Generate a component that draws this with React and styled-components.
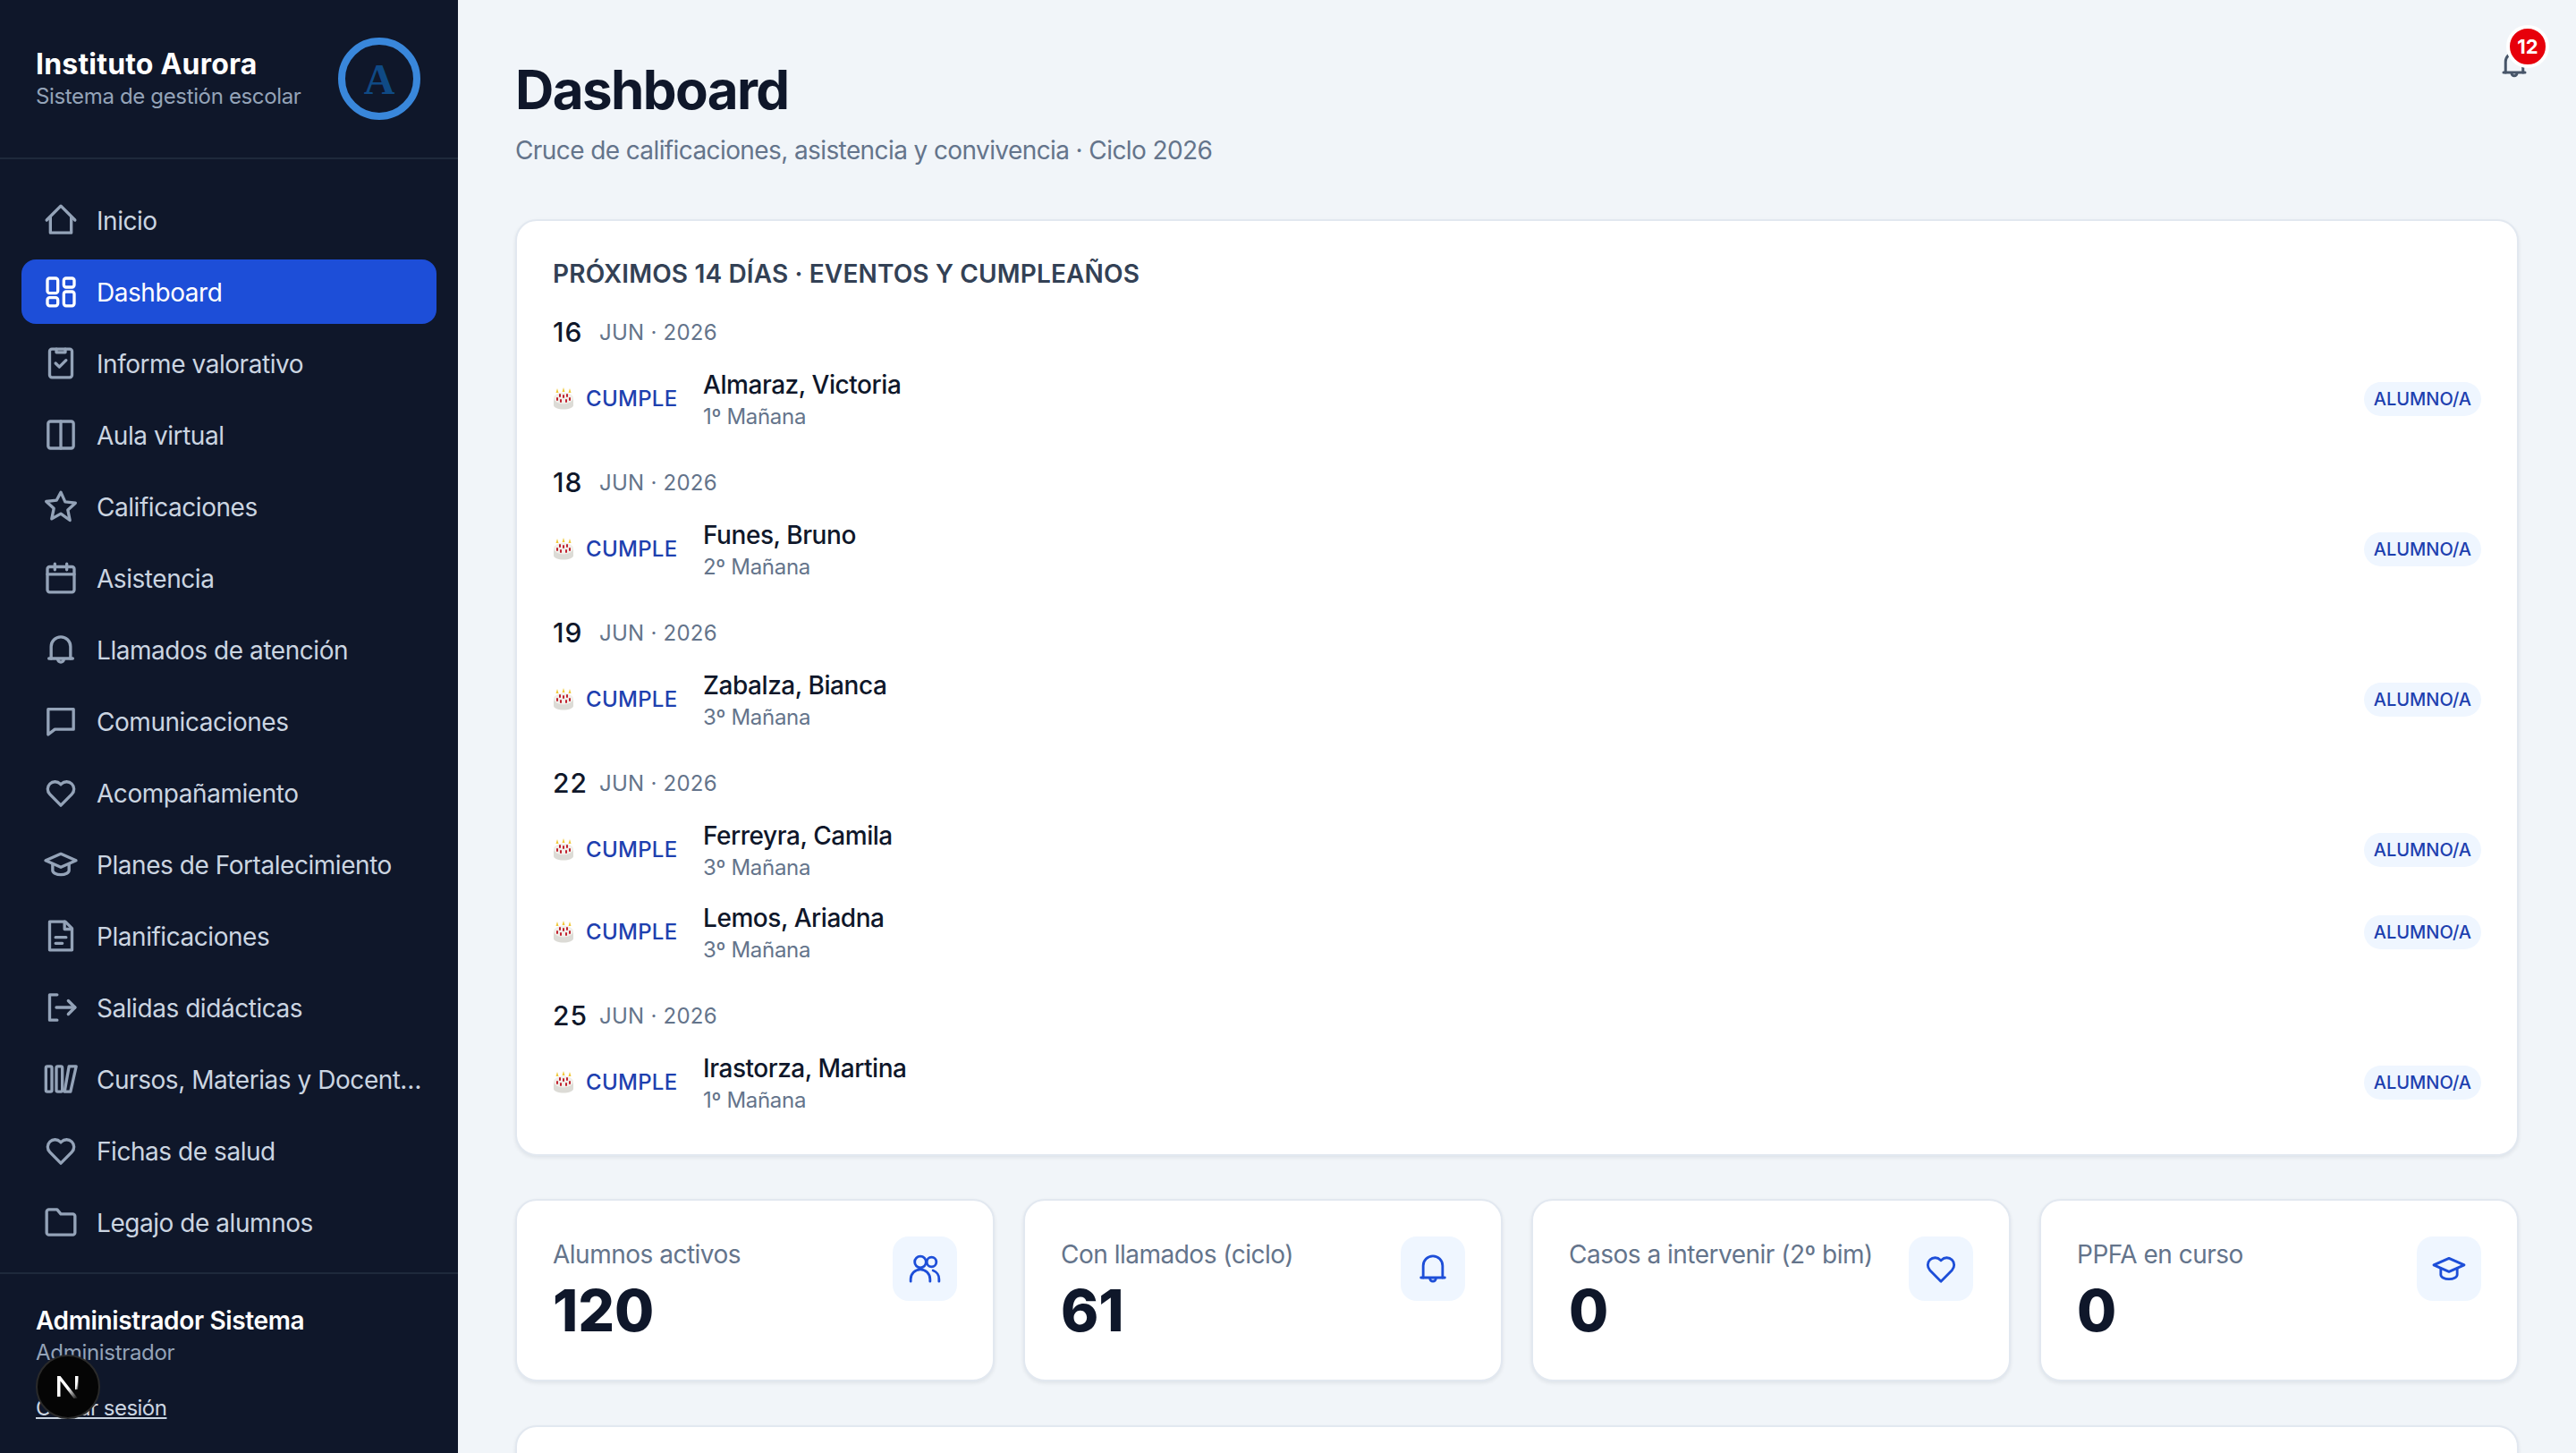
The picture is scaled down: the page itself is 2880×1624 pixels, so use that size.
import React from 'react'
import styled, { createGlobalStyle } from 'styled-components'

const GlobalStyle = createGlobalStyle`
    * {
        box-sizing: border-box;
    }

    html,
    body {
        margin: 0;
        padding: 0;
        background: #f1f5f9;
    }

    body {
        font-family: Inter, 'Liberation Sans', sans-serif;
        color: #0f172a;
    }
`

const Icon = ({ size = 40, stroke = 2, children }) => (
    <svg
        width={size}
        height={size}
        viewBox="0 0 24 24"
        fill="none"
        stroke="currentColor"
        strokeWidth={stroke}
        strokeLinecap="round"
        strokeLinejoin="round"
    >
        {children}
    </svg>
)

const glyphs = {
    home: (
        <>
            <path d="M2.5 12 12 2.5 21.5 12" />
            <path d="M5 10v10.5h14V10" />
        </>
    ),
    grid: (
        <>
            <rect x="3" y="3" width="7" height="10" rx="1.5" />
            <rect x="14" y="3" width="7" height="6" rx="1.5" />
            <rect x="14" y="12" width="7" height="9.5" rx="1.5" />
            <rect x="3" y="16" width="7" height="5.5" rx="1.5" />
        </>
    ),
    report: (
        <>
            <rect x="4.5" y="2.5" width="15" height="19" rx="1.5" />
            <path d="M9 2.5v2.2h6V2.5" />
            <path d="m8.5 12 2.5 2.5 4.5-4.5" />
        </>
    ),
    columns: (
        <>
            <rect x="3.5" y="3" width="17" height="18" rx="1.5" />
            <path d="M12 3v18" />
        </>
    ),
    star: <path d="m12 2.5 2.9 6.4 6.9.8-5.1 4.7 1.4 6.9L12 16.9l-6.1 3.4 1.4-6.9-5.1-4.7 6.9-.8z" />,
    calendar: (
        <>
            <rect x="3" y="4.5" width="18" height="17" rx="1.5" />
            <path d="M3 9.5h18M8 2.5v4M16 2.5v4" />
        </>
    ),
    bell: (
        <>
            <path d="M5.5 18V10a6.5 6.5 0 0 1 13 0v8" />
            <path d="M4 18h16" />
            <path d="M10 18.5a2 2 0 0 0 4 0" />
        </>
    ),
    chat: <path d="M3.5 4h17v13.5H8L3.5 21z" />,
    heart: <path d="M12 20.5 4.6 13a4.9 4.9 0 0 1 7-6.9l.4.4.4-.4a4.9 4.9 0 0 1 7 6.9z" />,
    cap: (
        <>
            <path d="M12 5 1.8 9.5 12 14l10.2-4.5z" />
            <path d="M6.5 12v4c0 1.6 2.5 3 5.5 3s5.5-1.4 5.5-3v-4" />
        </>
    ),
    doc: (
        <>
            <path d="M4.5 2.5H15l4.5 4.5v14.5h-15z" />
            <path d="M14.5 2.5V7.500h5" />
            <path d="M8.500 13h7M8.500 17h4.500" />
        </>
    ),
    exit: (
        <>
            <path d="M9.500 3.500h-5v17h5" />
            <path d="M9 12h12.500" />
            <path d="m17 7.500 4.500 4.500-4.500 4.500" />
        </>
    ),
    books: (
        <>
            <rect x="2" y="3.500" width="4" height="17" rx="1" />
            <rect x="9" y="3.500" width="4" height="17" rx="1" />
            <path d="M17.500 3.500h4.800L18.500 20.500h-4z" />
        </>
    ),
    folder: <path d="M2.500 5a1.500 1.500 0 0 1 1.500-1.500h5.500L12 6.500h8a1.500 1.500 0 0 1 1.500 1.500v11a1.500 1.500 0 0 1-1.500 1.500H4A1.500 1.500 0 0 1 2.500 19z" />,
    users: (
        <>
            <circle cx="9" cy="7.500" r="3.800" />
            <path d="M2.500 20.500v-1.500a6.500 6.500 0 0 1 13 0v1.500" />
            <circle cx="16.500" cy="7.500" r="3.200" />
            <path d="M17.500 13.200a6 6 0 0 1 4 5.800v1.500" />
        </>
    ),
}

const navItems = [
    ['home', 'Inicio'],
    ['grid', 'Dashboard', true],
    ['report', 'Informe valorativo'],
    ['columns', 'Aula virtual'],
    ['star', 'Calificaciones'],
    ['calendar', 'Asistencia'],
    ['bell', 'Llamados de atención'],
    ['chat', 'Comunicaciones'],
    ['heart', 'Acompañamiento'],
    ['cap', 'Planes de Fortalecimiento'],
    ['doc', 'Planificaciones'],
    ['exit', 'Salidas didácticas'],
    ['books', 'Cursos, Materias y Docentes'],
    ['heart', 'Fichas de salud'],
    ['folder', 'Legajo de alumnos'],
]

const agenda = [
    { day: '16', people: [['Almaraz, Victoria', '1º Mañana']] },
    { day: '18', people: [['Funes, Bruno', '2º Mañana']] },
    { day: '19', people: [['Zabalza, Bianca', '3º Mañana']] },
    {
        day: '22',
        people: [
            ['Ferreyra, Camila', '3º Mañana'],
            ['Lemos, Ariadna', '3º Mañana'],
        ],
    },
    { day: '25', people: [['Irastorza, Martina', '1º Mañana']] },
]

const stats = [
    ['Alumnos activos', '120', 'users'],
    ['Con llamados (ciclo)', '61', 'bell'],
    ['Casos a intervenir (2º bim)', '0', 'heart'],
    ['PPFA en curso', '0', 'cap'],
]

const Cake = () => (
    <CakeSvg viewBox="0 0 24 26" width="24" height="26">
        <path d="M1 13v8c0 2.500 5 4.500 11 4.500s11-2 11-4.500v-8z" fill="#dcdbd6" />
        <ellipse cx="12" cy="13" rx="11" ry="6.500" fill="#f1efea" />
        <g fill="#c2222f">
            <rect x="4" y="12" width="2" height="4" rx="1" />
            <rect x="8" y="14" width="2" height="4" rx="1" />
            <rect x="14" y="14" width="2" height="4" rx="1" />
            <rect x="18" y="12" width="2" height="4" rx="1" />
            <rect x="7" y="8" width="2" height="4" rx="1" />
            <rect x="11" y="9" width="2" height="4" rx="1" />
            <rect x="15" y="8" width="2" height="4" rx="1" />
        </g>
        <g fill="#f0c93c">
            <path d="M5 2 6.500 7h-3zM12 1l1.500 5h-3zM19 2l1.500 5h-3z" />
        </g>
    </CakeSvg>
)

const App = () => (
    <>
        <GlobalStyle />
        <Shell>
            <Sidebar>
                <Brand>
                    <BrandText>
                        <BrandName>Instituto Aurora</BrandName>
                        <BrandSub>Sistema de gestión escolar</BrandSub>
                    </BrandText>
                    <BrandLogo>A</BrandLogo>
                </Brand>

                <Nav>
                    {navItems.map(([icon, label, active]) => (
                        <NavRow key={label} $active={active}>
                            <NavIcon $active={active}>
                                <Icon>{glyphs[icon]}</Icon>
                            </NavIcon>
                            <NavLabel>{label}</NavLabel>
                        </NavRow>
                    ))}
                </Nav>

                <UserBox>
                    <UserName>Administrador Sistema</UserName>
                    <UserRole>Administrador</UserRole>
                    <Logout>Cerrar sesión</Logout>
                    <DevBadge>
                        <svg width="36" height="36" viewBox="0 0 36 36">
                            <defs>
                                <linearGradient id="nFade" x1="0" y1="0" x2="1" y2="1">
                                    <stop offset="0.55" stopColor="#fff" />
                                    <stop offset="1" stopColor="#fff" stopOpacity="0" />
                                </linearGradient>
                            </defs>
                            <path d="M6 6h3.500L29 31h-4.500L9.500 11.500V29H6z" fill="url(#nFade)" />
                            <rect x="26" y="6" width="3.500" height="15" fill="url(#nFade)" />
                        </svg>
                    </DevBadge>
                </UserBox>
            </Sidebar>

            <Main>
                <BellButton>
                    <Icon size={36}>{glyphs.bell}</Icon>
                    <BellCount>12</BellCount>
                </BellButton>

                <Title>Dashboard</Title>
                <Subtitle>Cruce de calificaciones, asistencia y convivencia · Ciclo 2026</Subtitle>

                <AgendaCard>
                    <CardTitle>Próximos 14 días · Eventos y cumpleaños</CardTitle>
                    {agenda.map((group) => (
                        <DayGroup key={group.day}>
                            <DayLine>
                                <DayNumber>{group.day}</DayNumber>
                                <DayMonth>JUN · 2026</DayMonth>
                            </DayLine>
                            {group.people.map(([name, course]) => (
                                <EventRow key={name}>
                                    <Cake />
                                    <EventKind>CUMPLE</EventKind>
                                    <EventBody>
                                        <EventName>{name}</EventName>
                                        <EventCourse>{course}</EventCourse>
                                    </EventBody>
                                    <EventTag>ALUMNO/A</EventTag>
                                </EventRow>
                            ))}
                        </DayGroup>
                    ))}
                </AgendaCard>

                <StatGrid>
                    {stats.map(([label, value, icon]) => (
                        <StatCard key={label}>
                            <StatText>
                                <StatLabel>{label}</StatLabel>
                                <StatValue>{value}</StatValue>
                            </StatText>
                            <StatIcon>
                                <Icon stroke={1.7}>{glyphs[icon]}</Icon>
                            </StatIcon>
                        </StatCard>
                    ))}
                </StatGrid>

                <NextCard />
            </Main>
        </Shell>
    </>
)

// LAYOUT
const Shell = styled.div`
    display: grid;
    grid-template-columns: 512px 1fr;
    height: 100vh;
    overflow: hidden;
`

// SIDEBAR
const Sidebar = styled.aside`
    display: flex;
    flex-direction: column;
    background: #0f172a;
    height: 100%;
`

const Brand = styled.div`
    height: 178px;
    padding: 0 42px 0 40px;
    border-bottom: 2px solid #1e293b;
    display: flex;
    align-items: center;
    justify-content: space-between;
`

const BrandText = styled.div`
    display: flex;
    flex-direction: column;
`

const BrandName = styled.div`
    font-size: 32px;
    line-height: 40px;
    font-weight: 700;
    letter-spacing: 0.2px;
    color: #fff;
`

const BrandSub = styled.div`
    font-size: 24px;
    line-height: 32px;
    letter-spacing: -0.35px;
    color: #94a3b8;
`

const BrandLogo = styled.div`
    width: 92px;
    height: 92px;
    border-radius: 50%;
    border: 8px solid #3987db;
    display: flex;
    align-items: center;
    justify-content: center;
    font-family: 'Liberation Serif', serif;
    font-weight: 700;
    font-size: 48px;
    color: #0f4a85;
`

const Nav = styled.nav`
    flex: 1;
    display: flex;
    flex-direction: column;
    gap: 8px;
    padding: 32px 24px 0;
`

const NavRow = styled.div`
    height: 72px;
    flex: none;
    display: flex;
    align-items: center;
    gap: 20px;
    padding: 0 16px 0 24px;
    border-radius: 16px;
    background: ${(p) => (p.$active ? '#1d4ed8' : 'transparent')};
    color: ${(p) => (p.$active ? '#fff' : '#cbd5e1')};
`

const NavIcon = styled.span`
    display: flex;
    flex: none;
    color: ${(p) => (p.$active ? '#fff' : '#94a3b8')};
`

const NavLabel = styled.span`
    padding-top: 1px;
    font-size: 28px;
    letter-spacing: -0.45px;
    white-space: nowrap;
    overflow: hidden;
    text-overflow: ellipsis;
`

const UserBox = styled.div`
    position: relative;
    border-top: 2px solid #1e293b;
    height: 202px;
    padding: 32px 40px 0;
`

const UserName = styled.div`
    font-size: 28px;
    line-height: 40px;
    font-weight: 600;
    letter-spacing: -0.35px;
    color: #fff;
`

const UserRole = styled.div`
    font-size: 24px;
    line-height: 32px;
    letter-spacing: -0.3px;
    color: #94a3b8;
`

const Logout = styled.div`
    margin-top: 30px;
    font-size: 24px;
    line-height: 32px;
    letter-spacing: -0.5px;
    color: #cbd5e1;
    text-decoration: underline;
`

const DevBadge = styled.div`
    position: absolute;
    left: 40px;
    top: 90px;
    width: 72px;
    height: 72px;
    border-radius: 50%;
    background: #050505;
    border: 2px solid #2a2a2a;
    display: flex;
    align-items: center;
    justify-content: center;
`

// MAIN
const Main = styled.main`
    position: relative;
    padding: 64px 64px 0;
    overflow: hidden;
    background: #f1f5f9;
`

const BellButton = styled.div`
    position: absolute;
    top: 54px;
    right: 51px;
    color: #475569;
    display: flex;
`

const BellCount = styled.span`
    position: absolute;
    top: -26px;
    right: -21px;
    width: 48px;
    height: 48px;
    border-radius: 50%;
    border: 4px solid #fff;
    background: #e7000b;
    color: #fff;
    font-size: 22px;
    font-weight: 700;
    display: flex;
    align-items: center;
    justify-content: center;
`

const Title = styled.h1`
    margin: 0;
    font-size: 60px;
    line-height: 72px;
    font-weight: 700;
    letter-spacing: -1.6px;
    color: #0f172a;
`

const Subtitle = styled.p`
    margin: 12px 0 0;
    font-size: 28px;
    line-height: 40px;
    letter-spacing: -0.6px;
    color: #64748b;
`

const Card = styled.section`
    background: #fff;
    border: 2px solid #e2e8f0;
    border-radius: 24px;
    box-shadow: 0 2px 4px rgba(15, 23, 42, 0.08);
`

const AgendaCard = styled(Card)`
    margin-top: 57px;
    height: 1047px;
    padding: 40px 40px 0;
`

const CardTitle = styled.h2`
    margin: 0 0 28px;
    font-size: 28px;
    line-height: 38px;
    font-weight: 600;
    letter-spacing: 0.15px;
    text-transform: uppercase;
    color: #334155;
`

const DayGroup = styled.div`
    margin-bottom: 30px;
`

const DayLine = styled.div`
    height: 36px;
    margin-bottom: 10px;
    display: flex;
    align-items: center;
`

const DayNumber = styled.span`
    width: 52px;
    font-size: 30px;
    font-weight: 500;
    letter-spacing: 1px;
    color: #0f172a;
`

const DayMonth = styled.span`
    font-size: 24px;
    letter-spacing: 0.25px;
    color: #64748b;
`

const EventRow = styled.div`
    height: 92px;
    display: flex;
    align-items: center;
`

const CakeSvg = styled.svg`
    flex: none;
`

const EventKind = styled.span`
    width: 131px;
    flex: none;
    margin-left: 13px;
    font-size: 24px;
    font-weight: 500;
    letter-spacing: 0.3px;
    color: #1e40af;
`

const EventBody = styled.div`
    flex: 1;
    padding-top: 4px;
`

const EventName = styled.div`
    font-size: 28px;
    line-height: 38px;
    font-weight: 500;
    letter-spacing: -0.45px;
    color: #0f172a;
`

const EventCourse = styled.div`
    font-size: 24px;
    line-height: 34px;
    letter-spacing: -0.3px;
    color: #64748b;
`

const EventTag = styled.span`
    height: 38px;
    margin-top: 2px;
    padding: 0 11px;
    border-radius: 19px;
    background: #eff6ff;
    color: #1e40af;
    font-size: 20px;
    font-weight: 500;
    display: flex;
    align-items: center;
`

const StatGrid = styled.div`
    margin-top: 48px;
    display: grid;
    grid-template-columns: repeat(4, 1fr);
    gap: 32px;
`

const StatCard = styled(Card)`
    height: 204px;
    padding: 40px;
    display: flex;
    justify-content: space-between;
    align-items: flex-start;
`

const StatText = styled.div`
    margin-top: -2px;
    display: flex;
    flex-direction: column;
    gap: 6px;
`

const StatLabel = styled.div`
    font-size: 28px;
    line-height: 44px;
    letter-spacing: -0.5px;
    white-space: nowrap;
    color: #64748b;
`

const StatValue = styled.div`
    font-size: 64px;
    line-height: 70px;
    font-weight: 800;
    color: #0f172a;
`

const StatIcon = styled.div`
    width: 72px;
    height: 72px;
    flex: none;
    border-radius: 18px;
    background: #eff6ff;
    color: #1d4ed8;
    display: flex;
    align-items: center;
    justify-content: center;
`

const NextCard = styled(Card)`
    margin-top: 49px;
    height: 400px;
`

export default App
